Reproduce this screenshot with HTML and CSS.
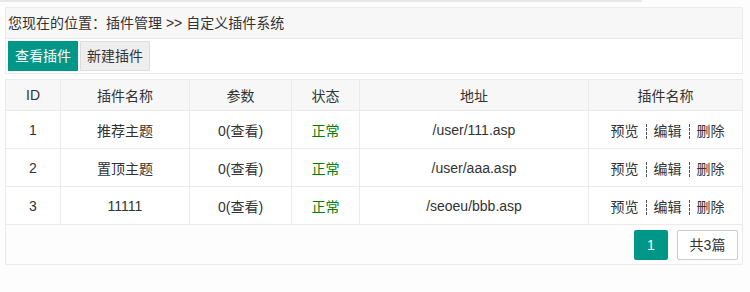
FILE: index.html
```html
<!DOCTYPE html>
<html lang="zh-CN">
<head>
    <meta charset="UTF-8">
    <title>自定义插件系统</title>
    <link rel="stylesheet" href="styles.css">
</head>
<body>
    <div class="topline"></div>
    <div class="wrap">
        <div class="crumb">您现在的位置：插件管理 &gt;&gt; 自定义插件系统</div>
        <div class="toolbar">
            <a class="btn btn-main" href="#">查看插件</a>
            <a class="btn btn-plain" href="#">新建插件</a>
        </div>

        <table class="list">
            <colgroup>
                <col style="width:55px">
                <col style="width:129px">
                <col style="width:102px">
                <col style="width:68px">
                <col style="width:229px">
                <col>
            </colgroup>
            <thead>
                <tr>
                    <th>ID</th>
                    <th>插件名称</th>
                    <th>参数</th>
                    <th>状态</th>
                    <th>地址</th>
                    <th>插件名称</th>
                </tr>
            </thead>
            <tbody>
                <tr>
                    <td>1</td>
                    <td>推荐主题</td>
                    <td>0(查看)</td>
                    <td class="ok">正常</td>
                    <td>/user/111.asp</td>
                    <td class="ops"><a href="#">预览</a><span class="sep"></span><a href="#">编辑</a><span class="sep"></span><a href="#">删除</a></td>
                </tr>
                <tr>
                    <td>2</td>
                    <td>置顶主题</td>
                    <td>0(查看)</td>
                    <td class="ok">正常</td>
                    <td>/user/aaa.asp</td>
                    <td class="ops"><a href="#">预览</a><span class="sep"></span><a href="#">编辑</a><span class="sep"></span><a href="#">删除</a></td>
                </tr>
                <tr>
                    <td>3</td>
                    <td>11111</td>
                    <td>0(查看)</td>
                    <td class="ok">正常</td>
                    <td>/seoeu/bbb.asp</td>
                    <td class="ops"><a href="#">预览</a><span class="sep"></span><a href="#">编辑</a><span class="sep"></span><a href="#">删除</a></td>
                </tr>
            </tbody>
            <tfoot>
                <tr>
                    <td colspan="6">
                        <div class="pager">
                            <span class="page cur">1</span>
                            <span class="page total">共3篇</span>
                        </div>
                    </td>
                </tr>
            </tfoot>
        </table>
    </div>
</body>
</html>
```

FILE: styles.css
```css
body {
    margin: 0;
    font-family: "Liberation Sans", "Noto Sans CJK SC", sans-serif;
    font-size: 14px;
    color: #333;
    background-color: #fdfdfd;
}
.topline {
    height: 2px;
    margin-right: 108px;
    background-color: #e8e8e8;
}
.wrap {
    padding: 5px 7px 0 5px;
}
a {
    color: #333;
    text-decoration: none;
}
.crumb {
    height: 30px;
    line-height: 30px;
    padding-left: 2px;
    background-color: #f7f7f7;
    border: 1px solid #ebebeb;
    border-bottom: none;
}
.toolbar {
    display: flex;
    gap: 2px;
    padding: 2px;
    background-color: #fff;
    border: 1px solid #ebebeb;
}
.btn {
    display: block;
    width: 70px;
    height: 30px;
    line-height: 30px;
    text-align: center;
    box-sizing: border-box;
}
.btn-main {
    background-color: #009688;
    color: #fff;
}
.btn-plain {
    background-color: #eee;
    border: 1px solid #ddd;
    line-height: 28px;
}
.list {
    width: 100%;
    margin-top: 5px;
    border-collapse: collapse;
    table-layout: fixed;
    background-color: #fff;
}
.list th,
.list td {
    border: 1px solid #ebebeb;
    text-align: center;
    font-weight: normal;
    padding: 0;
}
.list th {
    height: 30px;
    background-color: #f7f7f7;
}
.list tbody td {
    height: 37px;
}
.ok {
    color: #008000;
}
.ops {
    padding-left: 4px !important;
}
.sep {
    display: inline-block;
    height: 15px;
    margin: 0 7px;
    border-left: 1px dashed #555;
    vertical-align: middle;
}
.list tfoot td {
    height: 39px;
    background-color: #fdfdfd;
}
.pager {
    display: flex;
    justify-content: flex-end;
    gap: 9px;
    padding-right: 4px;
}
.page {
    display: block;
    height: 30px;
    line-height: 30px;
    border-radius: 2px;
    box-sizing: border-box;
}
.page.cur {
    width: 34px;
    background-color: #009688;
    color: #fff;
}
.page.total {
    width: 61px;
    border: 1px solid #ccc;
    line-height: 28px;
    background-color: #fff;
}
```
